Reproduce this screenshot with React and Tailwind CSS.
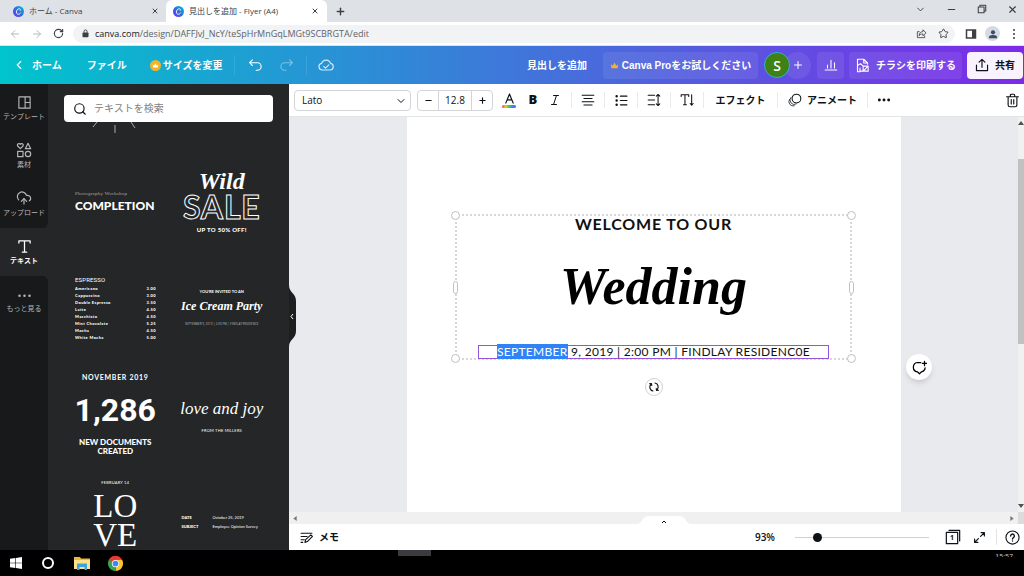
import { useState } from "react";
import {
  ArrowLeft,
  ArrowRight,
  ChevronDown,
  ChevronLeft,
  CloudUpload,
  Minus,
  Plus,
  RotateCw,
  Search,
  Star,
  X,
} from "lucide-react";

const menu = [
  ["Americano", "3.00"],
  ["Cappuccino", "3.00"],
  ["Double Espresso", "3.50"],
  ["Latte", "4.50"],
  ["Macchiato", "4.50"],
  ["Mint Chocolate", "5.25"],
  ["Mocha", "4.50"],
  ["White Mocha", "5.00"],
];

function CanvaLogo() {
  return (
    <svg viewBox="0 0 24 24" className="size-[11px] shrink-0" aria-hidden="true">
      <defs>
        <linearGradient id="logo" x1="0" y1="1" x2="1" y2="0">
          <stop offset="0" stopColor="#7d2ae8" />
          <stop offset="0.5" stopColor="#2b6fe0" />
          <stop offset="1" stopColor="#00c4cc" />
        </linearGradient>
      </defs>
      <circle cx="12" cy="12" r="12" fill="url(#logo)" />
      <path
        d="M16 9.500c.8-2-.4-3.500-2.300-3.500C10 6 7.500 9.500 7.500 13c0 3 1.600 5 4.200 5 2 0 3.700-1.200 4.800-3"
        fill="none"
        stroke="#fff"
        strokeWidth="2"
        strokeLinecap="round"
      />
    </svg>
  );
}

function Icon({ children, className = "size-4" }) {
  return (
    <svg
      viewBox="0 0 24 24"
      fill="none"
      stroke="currentColor"
      strokeWidth="1.8"
      strokeLinecap="round"
      strokeLinejoin="round"
      className={`shrink-0 ${className}`}
      aria-hidden="true"
    >
      {children}
    </svg>
  );
}

function Crown({ className }) {
  return (
    <svg viewBox="0 0 24 24" className={className} aria-hidden="true">
      <path
        d="M4 19 2 8.500l5.500 4L12 4l4.500 8.500 5.500-4L20 19z"
        fill="currentColor"
      />
    </svg>
  );
}

function BrowserBar() {
  return (
    <div className="shrink-0 bg-[#dee1e6] text-[#3c4043]">
      <div className="flex h-[22px] items-center">
        <div className="flex w-[166px] items-center gap-[5px] pr-[7px] pl-[13px] text-[8px]">
          <CanvaLogo />
          <span className="flex-1 truncate">ホーム - Canva</span>
          <button aria-label="閉じる"><X className="size-2" strokeWidth={3} /></button>
        </div>
        <div className="flex h-full w-[161px] items-center gap-[5px] rounded-t-md bg-white pr-[8px] pl-[7px] text-[8px]">
          <CanvaLogo />
          <span className="flex-1 truncate">見出しを追加 - Flyer (A4)</span>
          <button aria-label="閉じる"><X className="size-2" strokeWidth={3} /></button>
        </div>
        <button className="ml-2" aria-label="新しいタブ"><Plus className="size-[11px]" strokeWidth={3} /></button>
        <div className="mr-[6px] mb-1 ml-auto flex items-center gap-5">
          <ChevronDown className="size-[11px]" strokeWidth={2} />
          <button aria-label="最小化"><Minus className="size-[11px]" strokeWidth={2.500} /></button>
          <button aria-label="元に戻す">
            <Icon className="size-[10px]">
              <path d="M3 7h14v14H3zM7 7V3h14v14h-4" strokeWidth="2.500" />
            </Icon>
          </button>
          <button aria-label="ウィンドウを閉じる"><X className="size-[11px]" strokeWidth={2.500} /></button>
        </div>
      </div>
      <div className="flex h-[23px] items-center bg-white pr-[4px] pl-[9px]">
        <div className="flex w-16 items-center gap-[10px]">
          <button aria-label="戻る"><ArrowLeft className="size-3 text-[#b5b8bb]" /></button>
          <button aria-label="進む"><ArrowRight className="size-3 text-[#b5b8bb]" /></button>
          <button aria-label="再読み込み"><RotateCw className="size-[11px]" strokeWidth={2.500} /></button>
        </div>
        <div className="flex h-[18px] flex-1 items-center rounded-full bg-[#f1f3f4] pr-[6px] pl-2">
          <svg viewBox="0 0 24 24" className="size-[9px]" aria-hidden="true">
            <rect x="4" y="9" width="16" height="13" rx="2" fill="#3c4043" />
            <path d="M8 10V6.500a4 4 0 0 1 8 0V10" fill="none" stroke="#3c4043" strokeWidth="2.500" />
          </svg>
          <p className="ml-[5px] flex-1 text-[9px] text-[#5f6368]">
            <span className="text-[#202124]">canva.com</span>/design/DAFFJvJ_NcY/teSpHrMnGqLMGt9SCBRGTA/edit
          </p>
          <Icon className="size-[11px]">
            <path d="M7 8H3v13h16v-4M7 16c0-5 3-8 8-8V4l7 6.500-7 6.500v-4c-4 0-6 1-8 3z" />
          </Icon>
          <Star className="ml-[11px] size-[11px]" />
        </div>
        <div className="ml-[10px] flex items-center gap-2">
          <svg viewBox="0 0 12 12" className="size-3" aria-hidden="true">
            <path d="M1.500 2h9v8h-9z" fill="none" stroke="#3c4043" strokeWidth="1.500" />
            <path d="M7 2h4v8H7z" fill="#3c4043" />
          </svg>
          <span className="flex size-[15px] items-center justify-center rounded-full bg-[#d5dae3]">
            <svg viewBox="0 0 12 12" className="size-[10px]" fill="#3f4a63" aria-hidden="true">
              <circle cx="6" cy="4" r="2.500" />
              <path d="M1 11c0-3 2-3.700 5-3.700s5 .7 5 3.700z" />
            </svg>
          </span>
          <svg viewBox="0 0 12 12" className="size-3" fill="#3c4043" aria-hidden="true">
            <circle cx="6" cy="2" r="1" />
            <circle cx="6" cy="6" r="1" />
            <circle cx="6" cy="10" r="1" />
          </svg>
        </div>
      </div>
    </div>
  );
}

function Header() {
  return (
    <header className="flex h-[39px] shrink-0 items-center border-t border-[#cfe6f5] bg-[linear-gradient(90deg,#00c4cc,#7d2ae8)] pr-px text-[10px] font-bold whitespace-nowrap text-white">
      <a href="#home" className="ml-3 flex items-center gap-[6px]">
        <ChevronLeft className="size-[14px]" />
        ホーム
      </a>
      <button className="ml-[25px]">ファイル</button>
      <button className="ml-[23px] flex items-center gap-[2px]">
        <span className="flex size-[11px] items-center justify-center rounded-full bg-[#f5b324]">
          <Crown className="size-[7px]" />
        </span>
        サイズを変更
      </button>
      <span className="ml-[12px] h-5 w-px bg-white/10" />
      <button className="ml-[13px]" aria-label="元に戻す">
        <Icon className="size-[15px]">
          <path d="M7 3 2.500 7.500 7 12M3 7.500h12a6 6 0 0 1 0 12h-2" />
        </Icon>
      </button>
      <button className="ml-4 opacity-40" aria-label="やり直す">
        <Icon className="size-[15px]">
          <path d="m17 3 4.500 4.500L17 12M21 7.500H9a6 6 0 0 0 0 12h2" />
        </Icon>
      </button>
      <span className="ml-3 h-5 w-px bg-white/10" />
      <Icon className="ml-[11px] size-4 opacity-80">
        <path d="M6.500 19.500a5 5 0 0 1-1-9.900 7 7 0 0 1 13.300 0 5 5 0 0 1-.8 9.900zM8.500 14l2.800 2.800 5-5" />
      </Icon>
      <p className="ml-auto">見出しを追加</p>
      <button className="ml-4 flex h-[27px] w-[155px] items-center justify-center gap-[3px] rounded-sm bg-white/8">
        <Crown className="size-[9px] text-[#f5b324]" />
        <span className="font-['Liberation_Sans','Noto_Sans_CJK_JP',sans-serif]">Canva Proをお試しください</span>
      </button>
      <div className="ml-[6px] flex items-center">
        <span className="relative flex size-[26px] items-center justify-center rounded-full border border-[#2fb3c9] bg-[#3f8115] text-[14px] font-semibold">S</span>
        <button className="-ml-[6px] flex size-[27px] items-center justify-center rounded-full bg-white/8" aria-label="メンバーを追加">
          <Plus className="size-3" />
        </button>
      </div>
      <button className="ml-[6px] flex h-[27px] w-[27px] items-center justify-center rounded-sm bg-white/8" aria-label="インサイト">
        <Icon className="size-[14px]">
          <path d="M2 20.500h20M6 17v-5M12 17V4M18 17V8" />
        </Icon>
      </button>
      <button className="ml-[5px] flex h-[27px] w-[113px] items-center justify-center gap-[6px] rounded-sm bg-white/8">
        <Icon className="size-[15px]">
          <path d="M20 10V8l-6-6H4v20h4M14 2v6h6M4 12l5-3 4 4M13 13h8v8h-8zM13 21l8-8M8 16v5h5" />
        </Icon>
        チラシを印刷する
      </button>
      <button className="ml-[5px] flex h-[27px] w-14 items-center justify-center gap-[6px] rounded-sm bg-[#f8f3fe] text-[#0d1216]">
        <Icon className="size-[14px]">
          <path d="M12 16V2.500M7 7l5-4.700L17 7M2.500 12v9.500h19V12" strokeWidth="2" />
        </Icon>
        共有
      </button>
    </header>
  );
}

function SideItem({ label, active, after, children }) {
  return (
    <button
      className={`flex h-12 w-full flex-col items-center justify-center gap-[2px] text-[7px] leading-[10px] whitespace-nowrap ${
        active ? "bg-[#252627] font-bold text-white" : "bg-[#18191b] text-[#b5b6b8]"
      } ${after || ""}`}
    >
      {children}
      {label}
    </button>
  );
}

function SideNav() {
  return (
    <nav className="flex w-12 shrink-0 flex-col bg-[#252627]">
      <SideItem label="テンプレート">
        <Icon className="size-[15px]"><path d="M3 3h18v18H3zM13 3v18M13 12h8" /></Icon>
      </SideItem>
      <SideItem label="素材">
        <Icon>
          <path d="M6.500 10 2.500 6a2.300 2.300 0 0 1 4-2.500 2.300 2.300 0 0 1 4 2.500zM18 2l4 8h-8zM2.500 14h8v8h-8z" />
          <circle cx="18" cy="18" r="4" />
        </Icon>
      </SideItem>
      <SideItem label="アップロード" after="rounded-br-md">
        <CloudUpload className="size-4" strokeWidth={1.800} />
      </SideItem>
      <SideItem label="テキスト" active>
        <Icon className="size-[15px]"><path d="M3 6.500V3h18v3.500M12 3v18M8.500 21h7" strokeWidth="2" /></Icon>
      </SideItem>
      <div className="flex-1 rounded-tr-md bg-[#18191b]">
        <SideItem label="もっと見る" after="rounded-tr-md">
          <svg viewBox="0 0 24 24" className="size-[15px]" fill="currentColor" aria-hidden="true">
            <circle cx="4" cy="14" r="2" />
            <circle cx="12" cy="14" r="2" />
            <circle cx="20" cy="14" r="2" />
          </svg>
        </SideItem>
      </div>
    </nav>
  );
}

function TextPanel() {
  return (
    <aside className="relative flex w-[241px] shrink-0 flex-col bg-[#252627] px-4 pt-[11px] text-white">
      <label className="flex h-[27px] shrink-0 items-center gap-[7px] rounded-sm bg-white px-[9px] text-[#0d1216]">
        <Search className="size-[14px] shrink-0" />
        <input
          type="search"
          placeholder="テキストを検索"
          aria-label="テキストを検索"
          className="w-full text-[10px] outline-none placeholder:text-[#7b8085]"
        />
      </label>
      <div className="min-h-0 flex-1 overflow-hidden">
        <svg viewBox="0 0 48 12" className="mb-[17px] ml-[27px] h-3 w-12" stroke="#a9aaab" aria-hidden="true">
          <path d="M6 0 2 5M24 3v8M40 0l4 6" />
        </svg>
        <div className="grid grid-cols-2 gap-1">
          <div className="flex h-[102px] flex-col justify-center pl-[11px]">
            <span className="font-['Liberation_Serif'] text-[5px] leading-[8px] tracking-wider text-[#a5a6a7]">Photography Workshop</span>
            <span className="font-['Lato'] text-[12px] leading-[16px] font-black">COMPLETION</span>
          </div>
          <div className="flex h-[102px] flex-col items-center justify-center">
            <span className="font-['Liberation_Serif'] text-[24px] leading-[24px] font-bold italic">Wild</span>
            <span className="font-['Lato'] text-[32px] leading-[28px] font-bold tracking-wide text-transparent [-webkit-text-stroke:1px_white]">SALE</span>
            <span className="mt-[4px] font-['Lato'] text-[6px] leading-[10px] font-black tracking-wider">UP TO 50% OFF!</span>
          </div>

          <div className="flex h-[102px] flex-col justify-center pl-[11px]">
            <span className="font-['Roboto'] text-[6px] leading-[10px] tracking-wide">ESPRESSO</span>
            <ul className="h-[56px] w-[81px] overflow-hidden font-['Lato'] text-[4px] leading-[7px] font-black tracking-widest">
              {menu.map(([name, price]) => (
                <li key={name} className="flex justify-between">
                  <span>{name}</span>
                  <span>{price}</span>
                </li>
              ))}
            </ul>
          </div>
          <div className="flex h-[102px] flex-col items-center justify-center">
            <span className="font-['Lato'] text-[4px] leading-[6px] font-bold">YOU’RE INVITED TO AN</span>
            <span className="font-['Liberation_Serif'] text-[12px] leading-[22px] font-bold whitespace-nowrap italic">Ice Cream Party</span>
            <span className="mt-1 text-[3px] leading-[6px] whitespace-nowrap text-[#b5b6b8]">SEPTEMBER 9, 2019 | 2:00 PM | FINDLAY RESIDENCE</span>
          </div>

          <div className="flex h-[102px] flex-col items-center justify-center text-center font-['Lato']">
            <span className="text-[7px] leading-[10px] font-bold tracking-widest">NOVEMBER 2019</span>
            <span className="py-[5px] font-['Liberation_Sans_Narrow','Roboto'] text-[32px] leading-[46px] font-bold">1,286</span>
            <span className="text-[8px] leading-[9px] font-black">NEW DOCUMENTS<br />CREATED</span>
          </div>
          <div className="flex h-[102px] flex-col items-center justify-center">
            <span className="font-['Liberation_Serif'] text-[17px] leading-[28px] whitespace-nowrap italic">love and joy</span>
            <span className="mt-[5px] font-['Lato'] text-[4px] leading-[6px] tracking-wider">FROM THE MILLERS</span>
          </div>

          <div className="flex h-[102px] flex-col items-center pt-[11px]">
            <span className="font-['Lato'] text-[4px] leading-[6px] tracking-wider">FEBRUARY 14</span>
            <span className="mt-[6px] text-center font-['Liberation_Serif'] text-[33px] leading-[29px]">LO<br />VE</span>
          </div>
          <dl className="mt-[44px] ml-[11px] grid h-[18px] grid-cols-[31px_1fr] font-['Lato'] text-[4px] leading-[9px] whitespace-nowrap">
            <dt className="font-black">DATE</dt>
            <dd>October 25, 2019</dd>
            <dt className="font-black">SUBJECT</dt>
            <dd>Employee Opinion Survey</dd>
          </dl>
        </div>
      </div>
      <button className="absolute top-[201px] left-full z-10 h-[62px] w-2" aria-label="パネルを閉じる">
        <svg viewBox="0 0 8 62" className="h-full w-full" aria-hidden="true">
          <path d="M0 0c0 8 7 8 7 16v30c0 8-7 8-7 16z" fill="#1d1e20" />
          <path d="m4 29-2 2.500L4 34" fill="none" stroke="#fff" />
        </svg>
      </button>
    </aside>
  );
}

function Divider() {
  return <span className="h-4 w-px shrink-0 bg-[#e9eaec]" />;
}

function Toolbar() {
  const [size, setSize] = useState("12.8");
  const tool = "flex h-6 w-8 shrink-0 items-center justify-center";

  return (
    <div className="flex h-[33px] shrink-0 items-center border-b border-[#e3e4e7] bg-white pl-[5px] text-[10px] text-[#0d1216]">
      <div className="relative">
        <select aria-label="フォント" className="h-[21px] w-[117px] appearance-none rounded-sm border border-[#d3d5d8] px-[7px]">
          <option>Lato</option>
        </select>
        <ChevronDown className="pointer-events-none absolute top-[5px] right-1 size-3" />
      </div>
      <div className="ml-[6px] flex h-[21px] items-center rounded-sm border border-[#d3d5d8]">
        <button className="flex w-5 justify-center" aria-label="小さく" onClick={() => setSize(String(Number(size) - 1))}><Minus className="size-[9px]" strokeWidth={3} /></button>
        <input
          aria-label="フォントサイズ"
          value={size}
          onChange={(e) => setSize(e.target.value)}
          className="h-full w-[34px] border-x border-[#d3d5d8] text-center"
        />
        <button className="flex w-5 justify-center" aria-label="大きく" onClick={() => setSize(String(Number(size) + 1))}><Plus className="size-[9px]" strokeWidth={3} /></button>
      </div>
      <button className="ml-1 flex w-6 flex-col items-center" aria-label="文字の色">
        <Icon className="size-[11px]"><path d="M4 22 12 2l8 20M7 15h10" strokeWidth="2.500" /></Icon>
        <span className="mt-px h-[3px] w-[14px] rounded-full bg-[linear-gradient(90deg,#f0405a,#f6c228,#3fce5a,#2a8ff0,#8a4be0)]" />
      </button>
      <button className="w-6 text-[13px] font-extrabold" aria-label="太字">B</button>
      <button className="flex w-5 justify-center" aria-label="斜体">
        <Icon className="size-3"><path d="M9 3h10M5 21h10M15 3 9 21" strokeWidth="2" /></Icon>
      </button>
      <span className="w-[6px]" />
      <Divider />
      <button className={tool} aria-label="配置">
        <Icon className="size-[14px]"><path d="M2 4h20M5 9.500h14M2 15h20M5 20.500h14" /></Icon>
      </button>
      <Divider />
      <button className={tool} aria-label="リスト">
        <Icon className="size-[13px]">
          <path d="M10 4h12M10 12h12M10 20h12" strokeWidth="2.200" />
          <path d="M3 4h.1M3 12h.1M3 20h.1" strokeWidth="4.500" />
        </Icon>
      </button>
      <Divider />
      <button className={tool} aria-label="スペース">
        <Icon className="size-[14px]"><path d="M2 4h11M2 12h11M2 20h11M19 2.500v19M16 5.500l3-3 3 3M16 18.500l3 3 3-3" /></Icon>
      </button>
      <Divider />
      <button className={tool} aria-label="縦書き">
        <Icon className="size-[14px]"><path d="M2 6V3h13v3M8.500 3v17M6 20h5M20 3v18M17.500 18l2.500 3 2.500-3" /></Icon>
      </button>
      <Divider />
      <button className="h-6 w-[73px] shrink-0 font-bold">エフェクト</button>
      <Divider />
      <button className="flex h-6 w-[89px] shrink-0 items-center justify-center gap-[5px] font-bold">
        <Icon className="size-[14px]">
          <circle cx="14.500" cy="9.500" r="7.500" />
          <path d="M5 7.500a7.500 7.500 0 0 0 9 11.500M2.500 11a7.500 7.500 0 0 0 8.500 11" strokeWidth="1.300" />
        </Icon>
        アニメート
      </button>
      <Divider />
      <button className={tool} aria-label="もっと見る">
        <svg viewBox="0 0 24 24" className="size-[14px]" fill="currentColor" aria-hidden="true">
          <circle cx="4" cy="12" r="2.500" />
          <circle cx="12" cy="12" r="2.500" />
          <circle cx="20" cy="12" r="2.500" />
        </svg>
      </button>
      <button className="mr-1 ml-auto" aria-label="削除">
        <Icon className="size-[15px]"><path d="M2.500 6h19M5 6v13a3 3 0 0 0 3 3h8a3 3 0 0 0 3-3V6M8.500 6V3.500q0-1.500 1.500-1.500h4q1.500 0 1.500 1.500V6M10 10.500v7M14 10.500v7" /></Icon>
      </button>
    </div>
  );
}

function Design() {
  const corner = "absolute size-[9px] rounded-full border border-[#c0c1c4] bg-white";
  const side = "absolute top-[65px] h-[13px] w-[5px] rounded-full border border-[#c0c1c4] bg-white";

  return (
    <div className="mx-auto h-full w-[494px] bg-white pt-[97px] text-[#111] font-['Lato']">
      <div className="relative mx-auto flex w-[397px] flex-col items-center border-2 border-dotted border-[#d6d7da]">
        <p className="text-[16px] leading-[15px] font-bold tracking-wider">WELCOME TO OUR</p>
        <p className="pt-[23px] pb-[25px] font-['Liberation_Serif'] text-[52px] leading-[66px] font-bold text-black italic">Wedding</p>
        <p className="-mb-px w-[351px] border border-[#9455dd] text-center text-[12px] leading-[12px] tracking-wide whitespace-nowrap">
          <span className="bg-[#2f83f7] text-white">SEPTEMBER</span> 9, 2019 | 2:00 PM | FINDLAY RESIDENC0E
        </p>
        <span className={`${corner} -top-[5px] -left-[6px]`} />
        <span className={`${corner} -top-[5px] -right-[6px]`} />
        <span className={`${corner} -bottom-[5px] -left-[6px]`} />
        <span className={`${corner} -right-[6px] -bottom-[5px]`} />
        <span className={`${side} -left-[4px]`} />
        <span className={`${side} -right-[4px]`} />
        <button className="absolute top-[162px] flex size-[18px] items-center justify-center rounded-full border border-[#d0d1d4] bg-white" aria-label="回転">
          <Icon className="size-3">
            <path d="M10 20a8 8 0 0 1-4-13.500M3 5.500l4-.5.500 4M14 4a8 8 0 0 1 4 13.500M21 18.500l-4 .5-.5-4" strokeWidth="2.200" />
          </Icon>
        </button>
      </div>
    </div>
  );
}

function Footer() {
  const [zoom, setZoom] = useState(93);

  return (
    <footer className="relative flex h-[26px] shrink-0 items-center bg-white pr-1 pl-[11px] text-[10px] font-bold text-[#0d1216]">
      <button className="absolute -top-[9px] left-[51%] flex h-[9px] w-[54px] -translate-x-1/2 justify-center" aria-label="ページを表示">
        <svg viewBox="0 0 54 9" className="h-full w-full" aria-hidden="true">
          <path d="M0 9C5 9 5 1 12 1h30c7 0 7 8 12 8z" fill="#fff" />
          <path d="m25 8 2-2 2 2" fill="none" stroke="#0d1216" />
        </svg>
      </button>
      <button className="flex items-center gap-[6px]">
        <Icon className="size-[13px]">
          <path d="M2 4h20M2 10h11M2 16h6M2 21h3M9 21l1.500-5L20 7l3 3-9.500 9.500z" strokeWidth="2" />
        </Icon>
        メモ
      </button>
      <span className="ml-auto text-[10px] font-semibold">{zoom}%</span>
      <input
        type="range"
        min="10"
        max="600"
        value={zoom}
        onChange={(e) => setZoom(Number(e.target.value))}
        aria-label="ズーム"
        className="ml-5 h-px w-[134px] appearance-none bg-[#d0d1d4] [&::-webkit-slider-thumb]:size-[9px] [&::-webkit-slider-thumb]:appearance-none [&::-webkit-slider-thumb]:rounded-full [&::-webkit-slider-thumb]:bg-[#0d1216]"
      />
      <button className="relative ml-[16px] size-4 text-[7px]" aria-label="ページ">
        <Icon className="size-4"><path d="M2 5h17v17H2zM6 2h16v16" /></Icon>
        <span className="absolute top-[4px] left-[5px] leading-[10px]">1</span>
      </button>
      <button className="ml-3" aria-label="全画面表示">
        <Icon className="size-[13px]"><path d="M14 10l7-7M15 3h6v6M10 14l-7 7M3 15v6h6" strokeWidth="2.200" /></Icon>
      </button>
      <span className="ml-[10px] h-4 w-px bg-[#e3e4e7]" />
      <button className="ml-2" aria-label="ヘルプ">
        <Icon className="size-[15px]">
          <circle cx="12" cy="12" r="10.500" />
          <path d="M9 9.500a3 3 0 1 1 4.500 2.600c-1 .6-1.500 1-1.500 2.200M12 17.500v.1" strokeWidth="2.200" />
        </Icon>
      </button>
    </footer>
  );
}

function Taskbar() {
  return (
    <div className="flex h-[26px] shrink-0 items-center gap-5 bg-black pr-[11px] pl-[10px]">
      <button aria-label="スタート">
        <svg viewBox="0 0 12 12" className="size-3" fill="#fff" aria-hidden="true">
          <path d="M0 1.700 5.400 1v4.700H0zM6 .9 12 0v5.700H6zM0 6.300h5.400V11L0 10.300zM6 6.300h6V12l-6-.9z" />
        </svg>
      </button>
      <button className="size-3 rounded-full border-2 border-white" aria-label="検索" />
      <button aria-label="エクスプローラー">
        <svg viewBox="0 0 16 14" className="h-[14px] w-4" aria-hidden="true">
          <path d="M0 1h6l1 1.500h9V12H0z" fill="#e8b93c" />
          <path d="M0 4h16v9H0z" fill="#ffe08a" />
          <path d="M3 7.500h10V14h-2.500v-3h-5v3H3z" fill="#3aa5dc" />
        </svg>
      </button>
      <button aria-label="Chrome" className="-ml-[2px]">
        <svg viewBox="0 0 24 24" className="size-[15px]" aria-hidden="true">
          <path d="M12 12 1.600 6A12 12 0 0 1 22.400 6z" fill="#e53935" />
          <path d="M12 12 22.400 6A12 12 0 0 1 12 24z" fill="#fbc62c" />
          <path d="M12 12v12A12 12 0 0 1 1.600 6z" fill="#35a551" />
          <path d="M12 6h10.400l-5.200 9z" fill="#fbc62c" />
          <path d="M1.600 6h11L6.800 15z" fill="#35a551" />
          <path d="M1.600 6A12 12 0 0 1 22.400 6H12a6 6 0 0 0-5.200 3z" fill="#e53935" />
          <circle cx="12" cy="12" r="5.800" fill="#fff" />
          <circle cx="12" cy="12" r="4.600" fill="#4285f4" />
        </svg>
      </button>
      <span className="ml-[255px] h-[6px] w-[33px] self-start bg-[#3b3b3f]" />
      <time className="mt-[3px] ml-auto h-1 self-start overflow-hidden text-[7px] leading-[8px] text-[#c8c8c8]">15:57</time>
    </div>
  );
}

export default function App() {
  return (
    <div className="flex h-screen flex-col overflow-hidden bg-black font-['Open_Sans','Noto_Sans_CJK_JP',sans-serif]">
      <BrowserBar />
      <Header />
      <div className="flex min-h-0 flex-1">
        <SideNav />
        <TextPanel />
        <main className="flex min-w-0 flex-1 flex-col">
          <Toolbar />
          <div className="flex min-h-0 flex-1">
            <div className="relative min-w-0 flex-1 overflow-hidden bg-[#e9eaee]">
              <Design />
              <button className="absolute top-[237px] left-[617px] flex size-[26px] items-center justify-center rounded-full bg-white shadow-md" aria-label="コメントを追加">
                <Icon className="size-[15px]">
                  <path d="M14 4H9.500a7.500 7.500 0 0 0-1 14.900L12 22l3-3a7.500 7.500 0 0 0 6-6.500M20 2v7M16.500 5.500h7" strokeWidth="2" />
                </Icon>
              </button>
            </div>
            <div className="flex w-[6px] shrink-0 flex-col items-center bg-[#f1f1f1] pt-1 text-[#505050]">
              <svg viewBox="0 0 6 4" className="h-1 w-[6px]" fill="currentColor" aria-hidden="true"><path d="M0 4h6L3 0z" /></svg>
              <div className="mt-[34px] h-[185px] w-full bg-[#c1c1c1]" />
              <svg viewBox="0 0 6 4" className="mt-auto mb-1 h-1 w-[6px]" fill="currentColor" aria-hidden="true"><path d="M0 0h6L3 4z" /></svg>
            </div>
          </div>
          <div className="flex h-3 shrink-0 items-center justify-between bg-[#f0f0f0] pl-1 text-[#77787a]">
            <svg viewBox="0 0 4 6" className="h-[5px] w-1" fill="currentColor" aria-hidden="true"><path d="M4 0v6L0 3z" /></svg>
            <svg viewBox="0 0 4 6" className="mr-1 ml-auto h-[5px] w-1" fill="currentColor" aria-hidden="true"><path d="M0 0v6l4-3z" /></svg>
            <span className="h-full w-[6px] bg-[#dcdcdc]" />
          </div>
          <Footer />
        </main>
      </div>
      <Taskbar />
    </div>
  );
}
